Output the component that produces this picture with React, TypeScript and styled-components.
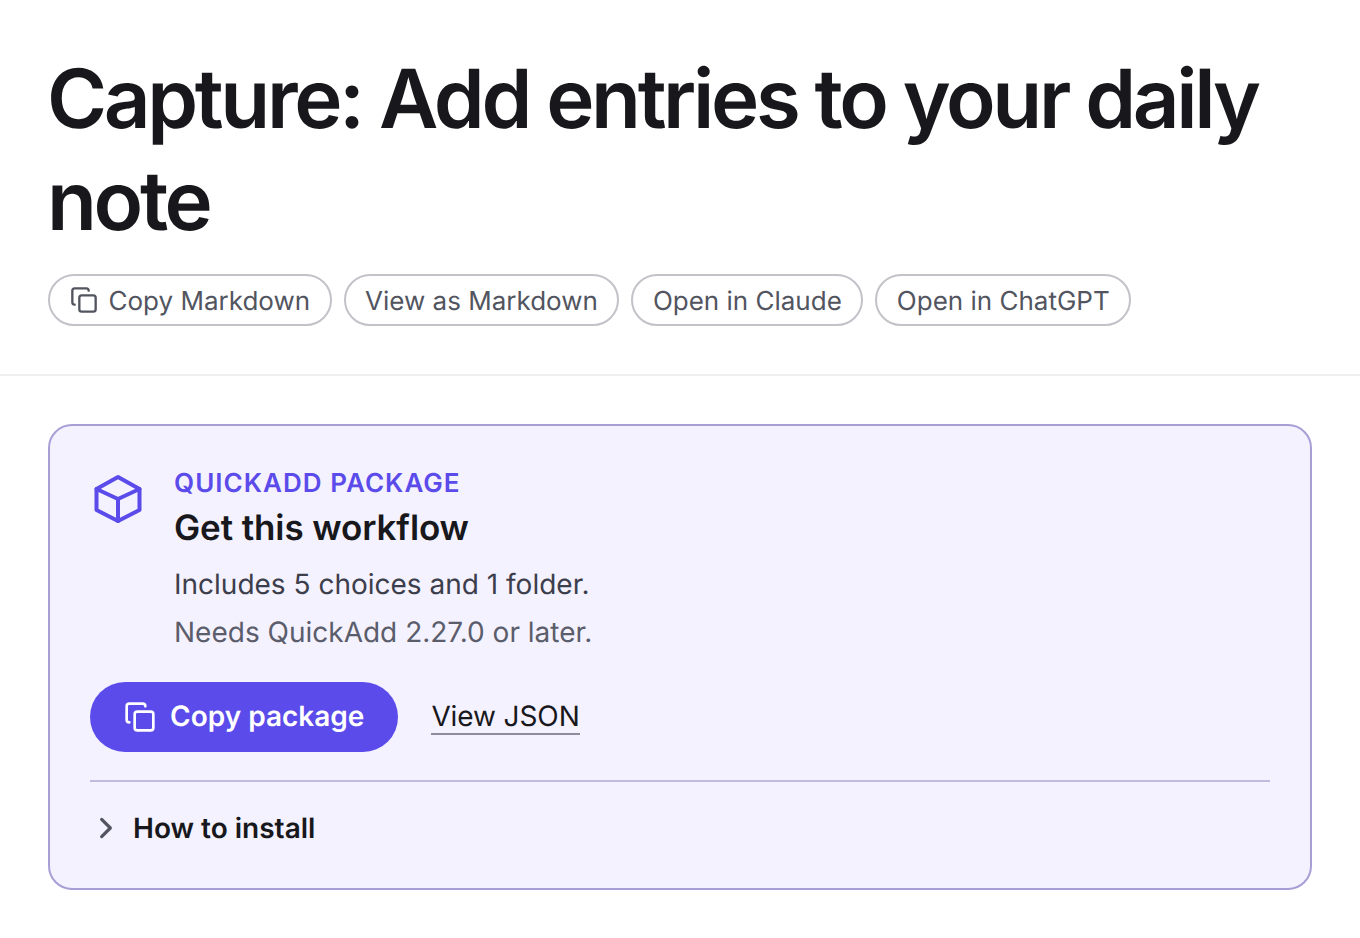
import React from 'react'
import styled, { createGlobalStyle } from 'styled-components'

const GlobalStyle = createGlobalStyle`
  html, body {
    margin: 0;
    padding: 0;
    background: #ffffff;
    font-family: Inter, "Liberation Sans", sans-serif;
    text-rendering: geometricPrecision;
  }
`

const Header = styled.header`
  padding: 48px 48px 48px;
  border-bottom: 2px solid #efeff2;
`

const Title = styled.h1`
  margin: 0 0 0 -1px;
  font-size: 81.6px;
  line-height: 102px;
  font-weight: 600;
  letter-spacing: -3.34px;
  color: #18181c;
`

const Actions = styled.div`
  display: flex;
  gap: 12px;
  margin-top: 22px;
`

const Pill = styled.a`
  display: inline-flex;
  align-items: center;
  gap: 11px;
  height: 52px;
  box-sizing: border-box;
  padding: 2px 19.5px 0;
  border: 2px solid #c2c2c9;
  border-radius: 26px;
  font-size: 26px;
  color: #52555f;
  white-space: nowrap;

  svg {
    margin-top: -2px;
  }
`

const Main = styled.main`
  padding: 48px 48px 0;
`

const Card = styled.section`
  box-sizing: border-box;
  height: 466px;
  padding: 42px 40px 0;
  border: 2px solid #a79fd6;
  border-radius: 24px;
  background: #f4f2ff;
`

const Top = styled.div`
  display: flex;
  gap: 30px;
`

const PackageIcon = styled.svg`
  width: 52px;
  height: 52px;
  flex: none;
  margin: 4px 0 0 2px;
  color: #5a4bea;
`

const Eyebrow = styled.div`
  font-size: 26px;
  line-height: 32px;
  font-weight: 600;
  letter-spacing: 1.04px;
  color: #5a4bea;
`

const Heading = styled.h2`
  margin: 4px 0 0;
  font-size: 35px;
  line-height: 48px;
  font-weight: 600;
  letter-spacing: -0.1px;
  color: #18181c;
`

const Info = styled.p<{ $muted?: boolean }>`
  margin: ${({ $muted }) => ($muted ? '8px' : '12px')} 0 0;
  font-size: 28px;
  line-height: 40px;
  color: ${({ $muted }) => ($muted ? '#5b5d6b' : '#3d3e4c')};
`

const ButtonRow = styled.div`
  display: flex;
  align-items: center;
  gap: 33px;
  margin-top: 30px;
`

const PrimaryButton = styled.button`
  display: inline-flex;
  align-items: center;
  gap: 14px;
  height: 70px;
  padding: 0 34px;
  border: 0;
  border-radius: 35px;
  background: #5a4bea;
  color: #ffffff;
  font: 600 28px Inter, "Liberation Sans", sans-serif;
  text-rendering: geometricPrecision;
`

const ButtonLabel = styled.span`
  padding-bottom: 2px;
`

const TextLink = styled.a`
  font-size: 28px;
  line-height: 33px;
  letter-spacing: -0.1px;
  color: #18181c;
  border-bottom: 2px solid #8d8d9e;
`

const Divider = styled.hr`
  margin: 28px 0 0;
  border: 0;
  height: 2px;
  background: #bfbce0;
`

const Summary = styled.div`
  display: flex;
  align-items: center;
  gap: 12px;
  margin-top: 26px;
  font-size: 28px;
  line-height: 40px;
  font-weight: 600;
  color: #18181c;
`

const Chevron = styled.svg`
  width: 32px;
  height: 32px;
  margin-left: -1px;
  color: #52555f;
`

const CopyIcon = ({ size }: { size: number }) => (
  <svg width={size} height={size} viewBox="0 0 24 24" fill="none" stroke="currentColor" strokeWidth="2" strokeLinecap="round" strokeLinejoin="round">
    <rect x="8" y="8" width="14" height="14" rx="2" />
    <path d="M4 16c-1.1 0-2-.9-2-2V4c0-1.1.9-2 2-2h10c1.1 0 2 .9 2 2" />
  </svg>
)

export default function App() {
  return (
    <>
      <GlobalStyle />
      <Header>
        <Title>Capture: Add entries to your daily note</Title>
        <Actions>
          <Pill><CopyIcon size={28} />Copy Markdown</Pill>
          <Pill>View as Markdown</Pill>
          <Pill>Open in Claude</Pill>
          <Pill>Open in ChatGPT</Pill>
        </Actions>
      </Header>
      <Main>
        <Card>
          <Top>
            <PackageIcon viewBox="0 0 52 52" fill="none" stroke="currentColor" strokeWidth="4" strokeLinecap="round" strokeLinejoin="round">
              <path d="M26 5 L47.5 17 V38 L26 49 L4.5 38 V17 Z" />
              <path d="M4.5 17 L26 27 L47.5 17" />
              <path d="M26 27 V49" />
            </PackageIcon>
            <div>
              <Eyebrow>QUICKADD PACKAGE</Eyebrow>
              <Heading>Get this workflow</Heading>
              <Info>Includes 5 choices and 1 folder.</Info>
              <Info $muted>Needs QuickAdd 2.27.0 or later.</Info>
            </div>
          </Top>
          <ButtonRow>
            <PrimaryButton><CopyIcon size={32} /><ButtonLabel>Copy package</ButtonLabel></PrimaryButton>
            <TextLink>View JSON</TextLink>
          </ButtonRow>
          <Divider />
          <Summary>
            <Chevron viewBox="0 0 24 24" fill="none" stroke="currentColor" strokeWidth="2.4" strokeLinecap="round" strokeLinejoin="round">
              <path d="M9.5 5.5l6.5 6.5-6.5 6.5" />
            </Chevron>
            How to install
          </Summary>
        </Card>
      </Main>
    </>
  )
}
